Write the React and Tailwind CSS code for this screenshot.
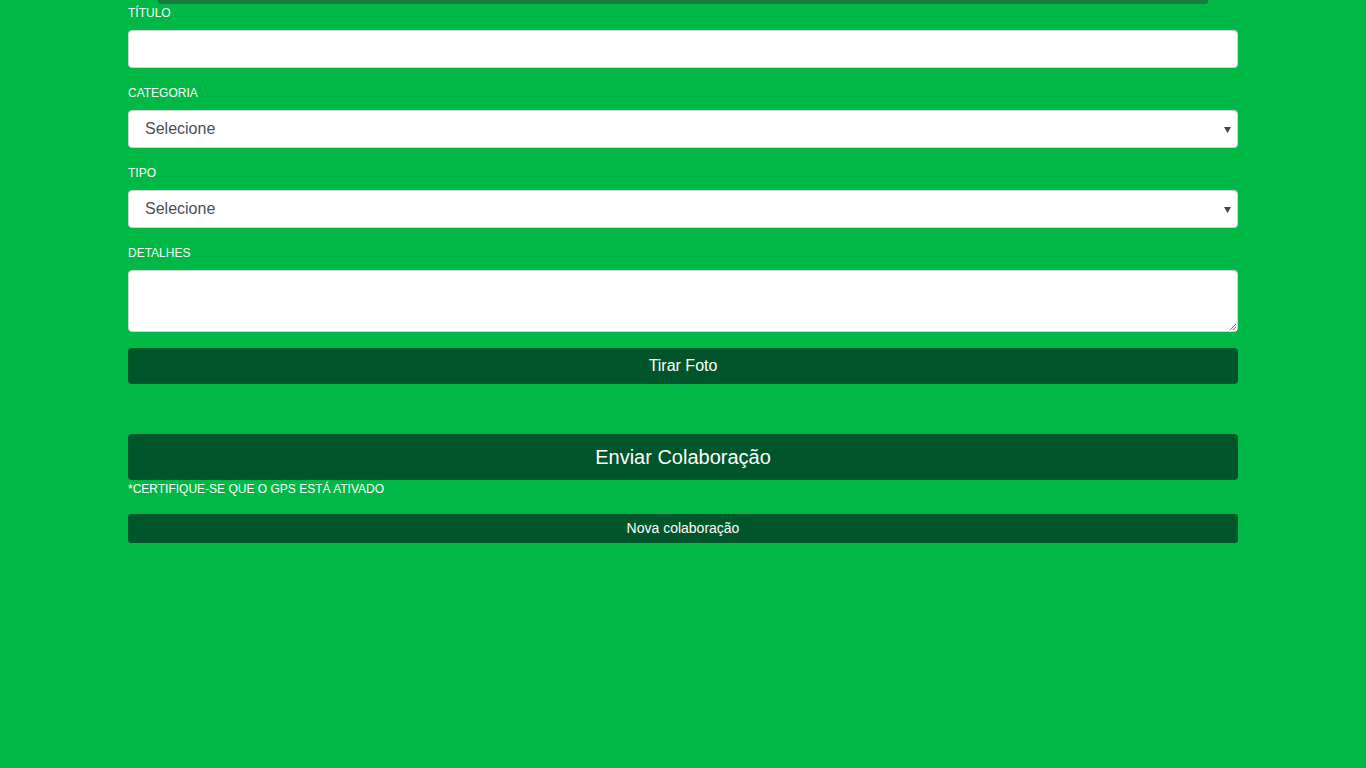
export default function App() {
  const label = "block text-[12px] leading-[18px] text-white uppercase";
  const field =
    "w-full h-[38px] rounded-[4px] border border-[#d4d4d4] bg-white";
  const Select = () => (
    <div className={`${field} flex items-center justify-between pl-[16px] pr-[6px]`}>
      <span className="text-[16px] text-[#495057]">Selecione</span>
      <svg width="7" height="6" viewBox="0 0 7 6" className="mt-[1px]">
        <path d="M0 0H7L3.5 6Z" fill="#444" />
      </svg>
    </div>
  );
  return (
    <div
      className="min-h-[768px] w-full bg-[#00b845]"
      style={{ fontFamily: '"Liberation Sans", Arial, sans-serif' }}
    >
      <div className="mx-[158px] h-[4px] rounded-b-[3px] bg-[#187c3f]" />
      <div className="mx-[128px] flex flex-col">
        <div className="flex flex-col">
          <span className={label}>Título</span>
          <div className="mt-[8px]">
            <div className={field} />
          </div>
        </div>
        <div className="mt-[16px] flex flex-col">
          <span className={label}>Categoria</span>
          <div className="mt-[8px]">
            <Select />
          </div>
        </div>
        <div className="mt-[16px] flex flex-col">
          <span className={label}>Tipo</span>
          <div className="mt-[8px]">
            <Select />
          </div>
        </div>
        <div className="mt-[16px] flex flex-col">
          <span className={label}>Detalhes</span>
          <div className="mt-[8px] relative">
            <div className="w-full h-[62px] rounded-[4px] border border-[#d4d4d4] bg-white" />
            <svg width="7" height="7" viewBox="0 0 7 7" className="absolute right-[2px] bottom-[2px]">
              <path d="M7 1L1 7M7 4L4 7" stroke="#777" strokeWidth="1" />
            </svg>
          </div>
        </div>
        <button className="mt-[16px] h-[36px] w-full rounded-[4px] bg-[#01552a] text-[16px] text-white">
          Tirar Foto
        </button>
        <button className="mt-[50px] h-[46px] w-full rounded-[4px] bg-[#01552a] text-[20px] text-white">
          Enviar Colaboração
        </button>
        <span className="text-[12px] leading-[18px] text-white">
          *CERTIFIQUE-SE QUE O GPS ESTÁ ATIVADO
        </span>
        <button className="mt-[16px] h-[29px] w-full rounded-[3px] bg-[#01552a] text-[14px] text-white">
          Nova colaboração
        </button>
      </div>
    </div>
  );
}
